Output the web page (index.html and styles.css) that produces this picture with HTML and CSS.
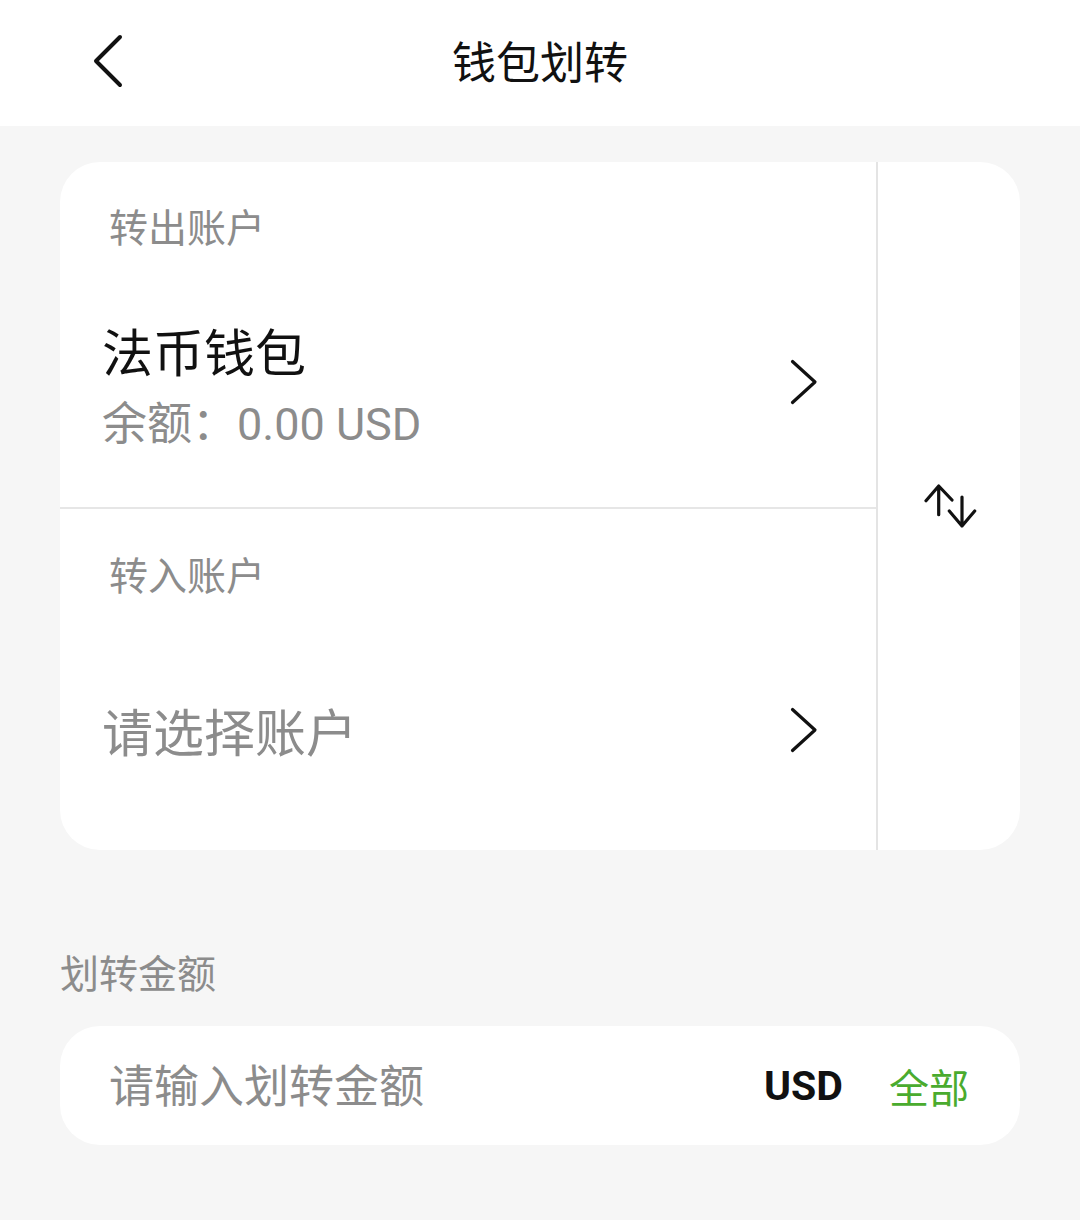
FILE: index.html
```html
<!DOCTYPE html>
<html lang="zh-CN">
<head>
  <meta charset="UTF-8" />
  <meta name="viewport" content="width=device-width, initial-scale=1.0"/>
  <title>钱包划转</title>
  <link rel="stylesheet" href="styles.css">
</head>
<body>
  <header class="topbar">
    <button class="back" aria-label="返回">
      <svg width="32" height="56" viewBox="0 0 32 56"><path d="M28 3 L4 27 L28 51" /></svg>
    </button>
    <h1>钱包划转</h1>
    <span></span>
  </header>

  <main class="page">
    <div class="transfer-card">
      <div class="accounts">
        <div class="account from">
          <div class="label">转出账户</div>
          <div class="row">
            <div>
              <div class="name">法币钱包</div>
              <div class="balance">余额：0.00 USD</div>
            </div>
            <svg class="chevron" width="28" height="46" viewBox="0 0 28 46"><path d="M2.5 2.5 L25 23 L2.5 43.5" /></svg>
          </div>
        </div>
        <div class="account to">
          <div class="label">转入账户</div>
          <div class="row">
            <div class="name placeholder">请选择账户</div>
            <svg class="chevron" width="28" height="46" viewBox="0 0 28 46"><path d="M2.5 2.5 L25 23 L2.5 43.5" /></svg>
          </div>
        </div>
      </div>
      <div class="swap">
        <svg width="54" height="46" viewBox="0 0 54 46">
          <path d="M15.7 3 V31.7 M3 17.7 L15.7 3 L29 17" />
          <path d="M39 14 V43 M26.3 28 L39 43 L51.7 28" />
        </svg>
      </div>
    </div>

    <div class="amount-label">划转金额</div>
    <div class="amount-box">
      <input type="text" placeholder="请输入划转金额">
      <span class="currency">USD</span>
      <span class="all">全部</span>
    </div>
  </main>
</body>
</html>
```

FILE: styles.css
```css
* {
  box-sizing: border-box;
}
body {
  margin: 0;
  font-family: Roboto, "Noto Sans CJK SC", sans-serif;
  background: #f6f6f6;
  color: #111;
  height: 1220px;
}
.topbar {
  height: 126px;
  background: #fff;
  display: grid;
  grid-template-columns: 1fr auto 1fr;
  align-items: center;
}
.back {
  justify-self: start;
  margin-left: 92px;
  margin-top: -2px;
  padding: 0;
  border: none;
  background: none;
  display: flex;
}
.back path {
  fill: none;
  stroke: #111;
  stroke-width: 4;
  stroke-linecap: round;
  stroke-linejoin: round;
}
.topbar h1 {
  margin: 0 0 6px;
  font-size: 44px;
  font-weight: 400;
  line-height: 44px;
  font-family: "Noto Sans CJK SC", sans-serif;
}
.page {
  padding: 36px 60px 0;
}
.transfer-card {
  background: #fff;
  border-radius: 40px;
  display: flex;
  height: 688px;
}
.accounts {
  flex: 1;
  display: flex;
  flex-direction: column;
}
.swap {
  width: 144px;
  border-left: 2px solid #e4e4e4;
  display: flex;
  align-items: center;
  justify-content: center;
  padding-left: 2px;
}
.swap path {
  fill: none;
  stroke: #111;
  stroke-width: 3.2;
  stroke-linecap: round;
  stroke-linejoin: round;
}
.account {
  padding: 48px 58px 0 48px;
}
.account.from {
  height: 347px;
  border-bottom: 2px solid #e6e6e6;
}
.account.to {
  flex: 1;
  padding-top: 49px;
}
.label {
  font-size: 39px;
  line-height: 39px;
  color: #8c8c8c;
  padding-left: 1px;
}
.row {
  display: flex;
  align-items: center;
  justify-content: space-between;
  margin-left: -6px;
}
.from .row {
  margin-top: 80px;
}
.to .row {
  margin-top: 112px;
}
.name {
  font-size: 51px;
  line-height: 51px;
  color: #111;
}
.name.placeholder {
  color: #8c8c8c;
}
.balance {
  margin-top: 22px;
  font-size: 45px;
  line-height: 45px;
  color: #8c8c8c;
}
.from .chevron {
  margin-top: -12px;
}
.to .chevron {
  margin-top: -10px;
}
.chevron path {
  fill: none;
  stroke: #111;
  stroke-width: 3.2;
  stroke-linecap: round;
  stroke-linejoin: round;
}
.amount-label {
  margin-top: 106px;
  font-size: 39px;
  line-height: 39px;
  color: #8c8c8c;
}
.amount-box {
  margin-top: 31px;
  height: 119px;
  background: #fff;
  border-radius: 40px;
  display: flex;
  align-items: center;
  padding: 0 51px 0 49px;
}
.amount-box input {
  flex: 1;
  min-width: 0;
  border: none;
  outline: none;
  background: none;
  padding: 0;
  margin-bottom: 4px;
  font-family: "Noto Sans CJK SC", sans-serif;
  font-size: 45px;
  color: #111;
}
.amount-box input::placeholder {
  color: #8c8c8c;
}
.currency {
  font-size: 41px;
  font-weight: 700;
  color: #111;
  margin-right: 46px;
}
.all {
  font-size: 40px;
  color: #4aab2e;
}
```
